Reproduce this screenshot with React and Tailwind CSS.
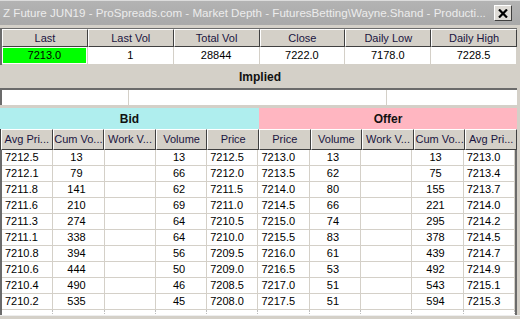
import React from "react";

const bid = [
  ["7212.5", "13", "13", "7212.5"],
  ["7212.1", "79", "66", "7212.0"],
  ["7211.8", "141", "62", "7211.5"],
  ["7211.6", "210", "69", "7211.0"],
  ["7211.3", "274", "64", "7210.5"],
  ["7211.1", "338", "64", "7210.0"],
  ["7210.8", "394", "56", "7209.5"],
  ["7210.6", "444", "50", "7209.0"],
  ["7210.4", "490", "46", "7208.5"],
  ["7210.2", "535", "45", "7208.0"],
];
const offer = [
  ["7213.0", "13", "13", "7213.0"],
  ["7213.5", "62", "75", "7213.4"],
  ["7214.0", "80", "155", "7213.7"],
  ["7214.5", "66", "221", "7214.0"],
  ["7215.0", "74", "295", "7214.2"],
  ["7215.5", "83", "378", "7214.5"],
  ["7216.0", "61", "439", "7214.7"],
  ["7216.5", "53", "492", "7214.9"],
  ["7217.0", "51", "543", "7215.1"],
  ["7217.5", "51", "594", "7215.3"],
];

const topHeads = ["Last", "Last Vol", "Total Vol", "Close", "Daily Low", "Daily High"];
const topVals = ["7213.0", "1", "28844", "7222.0", "7178.0", "7228.5"];
const colHeads = [
  "Avg Pri...",
  "Cum Vo...",
  "Work V...",
  "Volume",
  "Price",
  "Price",
  "Volume",
  "Work V...",
  "Cum Vo...",
  "Avg Pri...",
];

function HeadCell({ children, h }) {
  return (
    <div
      className={`${h} flex items-center justify-center overflow-hidden whitespace-nowrap bg-[#d4d0c8] border-t border-l border-t-white border-l-white border-r border-b border-r-[#404040] border-b-[#404040] text-[#1a1440] leading-none`}
    >
      {children}
    </div>
  );
}

function Dec({ v }) {
  return (
    <div className="h-[16px] flex items-center pl-[3px] border-r border-b border-[#d4d0c8] leading-none overflow-hidden whitespace-nowrap">
      {v}
    </div>
  );
}
function Int({ v }) {
  return (
    <div className="h-[16px] flex items-center justify-center pr-[4px] border-r border-b border-[#d4d0c8] leading-none overflow-hidden whitespace-nowrap">
      {v}
    </div>
  );
}

export default function App() {
  return (
    <div className="w-[520px] h-[319px] overflow-hidden bg-[#d4d0c8] flex flex-col text-[11px] text-black font-['Liberation_Sans',Arial,sans-serif]">
      {/* Title bar */}
      <div className="h-[25px] shrink-0 flex items-center bg-gradient-to-b from-[#b3b3b3] to-[#a9a9a9] border-t border-[#dcdcdc] pl-[3px] pr-[8px]">
        <div className="flex-1 min-w-0 text-[11.6px] text-[#ececec] whitespace-nowrap">
          Z Future JUN19 - ProSpreads.com - Market Depth - FuturesBetting\Wayne.Shand - Producti...
        </div>
        <div className="w-[18px] h-[16px] shrink-0 flex items-center justify-center bg-[#dedbd6] border border-t-white border-l-white border-r-[#404040] border-b-[#404040] ml-[2px]">
          <svg width="10" height="9" viewBox="0 0 10 9">
            <path d="M1 0.5 L9 8.5 M9 0.5 L1 8.5" stroke="#000" strokeWidth="2.2" />
          </svg>
        </div>
      </div>
      <div className="h-[3px] shrink-0" />

      {/* Top summary grid */}
      <div className="w-[517px] shrink-0 border-l-2 border-t border-[#6b6b6b]">
        <div className="grid grid-cols-6">
          {topHeads.map((h) => (
            <HeadCell key={h} h="h-[18px] text-[11px]">
              {h}
            </HeadCell>
          ))}
        </div>
        <div className="grid grid-cols-6 bg-white">
          {topVals.map((v, i) => (
            <div
              key={i}
              className="h-[18px] border-r border-b border-[#d4d0c8] p-[1px]"
            >
              <div
                className={`h-full flex items-center justify-center leading-none ${
                  i === 0 ? "bg-[#00ff00]" : ""
                }`}
              >
                {v}
              </div>
            </div>
          ))}
        </div>
      </div>

      {/* Implied */}
      <div className="h-[23px] shrink-0 flex items-center justify-center font-bold text-[12px] text-[#111]">
        Implied
      </div>
      <div className="w-[517px] h-[17px] shrink-0 bg-white border-t-2 border-l-2 border-[#6b6b6b] flex">
        <div className="w-[127px] border-r border-[#d4d0c8]" />
        <div className="w-[258px] border-r border-[#d4d0c8]" />
        <div className="flex-1" />
      </div>
      <div className="h-[3px] shrink-0" />

      {/* Bid / Offer bar */}
      <div className="w-[517px] h-[21px] shrink-0 flex font-bold text-[12px] text-[#111]">
        <div className="w-[259px] bg-[#afeeee] flex items-center justify-center">Bid</div>
        <div className="flex-1 bg-[#ffb6c1] flex items-center justify-center">Offer</div>
      </div>

      {/* Column headers */}
      <div className="w-[517px] shrink-0 border-l border-[#404040] grid grid-cols-10">
        {colHeads.map((h, i) => (
          <HeadCell key={i} h="h-[21px] text-[11px]">
            {h}
          </HeadCell>
        ))}
      </div>

      {/* Data */}
      <div className="w-[517px] h-[165px] shrink-0 overflow-hidden bg-white border-l-2 border-r-2 border-[#6b6b6b]">
        <div className="grid grid-cols-10">
          {bid.map((b, r) => (
            <React.Fragment key={r}>
              <Dec v={b[0]} />
              <Int v={b[1]} />
              <Int v="" />
              <Int v={b[2]} />
              <Dec v={b[3]} />
              <Dec v={offer[r][0]} />
              <Int v={offer[r][1]} />
              <Int v="" />
              <Int v={offer[r][2]} />
              <Dec v={offer[r][3]} />
            </React.Fragment>
          ))}
          {Array.from({ length: 10 }).map((_, i) => (
            <div key={"e" + i} className="h-[16px] border-r border-dotted border-[#bdbdbd]" />
          ))}
        </div>
      </div>
      <div className="flex-1 border-t border-[#eeeeee]" />
    </div>
  );
}
